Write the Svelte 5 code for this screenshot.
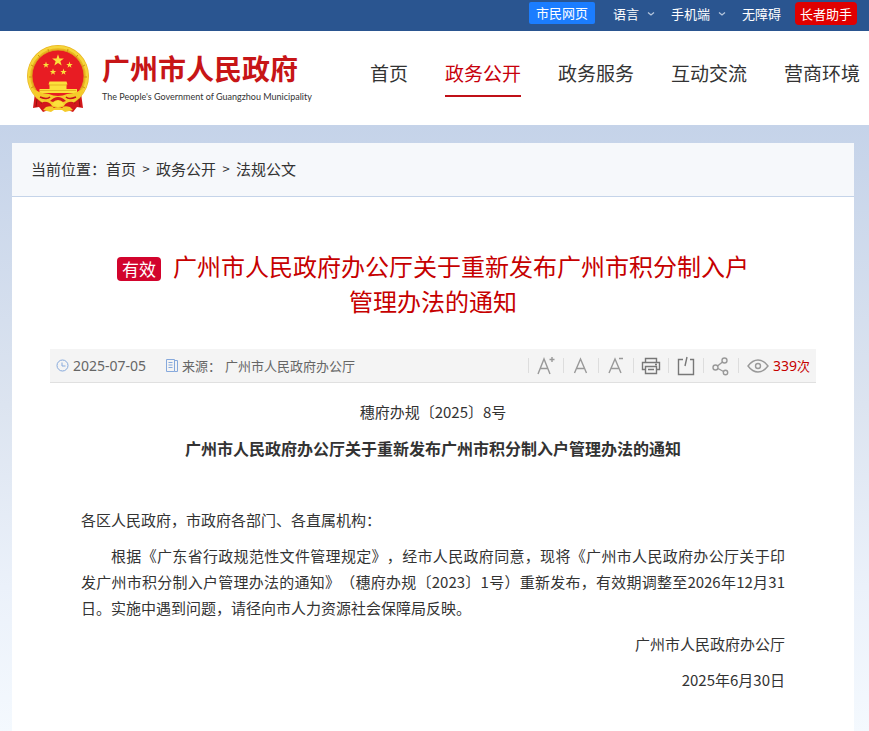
<script>
  const nav = ['首页', '政务公开', '政务服务', '互动交流', '营商环境'];
  const current = '政务公开';
  const crumbs = ['首页', '政务公开', '法规公文'];
  const star = '0,-10 2.4,-3.2 9.5,-3.1 3.8,1.2 5.9,8.1 0,4 -5.9,8.1 -3.8,1.2 -9.5,-3.1 -2.4,-3.2';
  const stars = [
    [31, 15.5, 0.62],
    [19, 20, 0.34],
    [42.5, 20, 0.34],
    [26, 27, 0.34],
    [36.5, 27, 0.34]
  ];
</script>

<div class="page">
  <div class="topbar">
    <a class="citizen" href="#citizen">市民网页</a>
    <button class="drop">语言
      <svg width="8" height="6" viewBox="0 0 8 6"><path d="M1 1.5 4 4l3-2.5" /></svg>
    </button>
    <button class="drop">手机端
      <svg width="8" height="6" viewBox="0 0 8 6"><path d="M1 1.5 4 4l3-2.5" /></svg>
    </button>
    <a class="plain" href="#accessible">无障碍</a>
    <a class="elder" href="#elder">长者助手</a>
  </div>

  <header>
    <a class="logo" href="#home">
      <svg class="emblem" width="64" height="68" viewBox="0 0 64 68" aria-hidden="true">
        <path d="M9 48 7 63l6-1 4 5 8-3h14l8 3 4-5 6 1-2-15z" fill="#d3181b" />
        <path d="M11 54 10 62M15 55l1 9M49 55l-1 9M53 54l1 8" stroke="#96100f" fill="none" />
        <circle cx="32" cy="31" r="31" fill="#e9b51f" />
        <circle cx="32" cy="31" r="29" fill="none" stroke="#f6d53a" stroke-width="2.5" />
        <path d="M5 20l4 2M3 32h4M5 43l4-2M12 10l3 3M22 4l1 4M59 20l-4 2M61 32h-4M59 43l-4-2M52 10l-3 3M42 4l-1 4" stroke="#cf9214" />
        <circle cx="32" cy="31" r="26" fill="#e81c23" stroke="#dca41a" stroke-width=".8" />
        <g fill="#fbe03b" transform="translate(1 0)">
          {#each stars as [x, y, s]}
            <polygon points={star} transform="translate({x} {y}) scale({s})" />
          {/each}
          <path d="M22.5 36.500h17l1 3h-1v4.500h10.500v4H12.500v-4H22.500v-4.500h-1z" />
        </g>
        <path d="M23 40h18M14 45.500h36" stroke="#e2a91c" stroke-width=".8" />
        <path d="M6 43q6 5 17 6 4 2 9 2t9-2q11-1 17-6-1 9-9 12l-8 3q-4 5-9 5t-9-5l-8-3Q7 52 6 43z" fill="#f5cb2a" />
        <path d="M14 52q7 3 10 0M50 52q-7 3-10 0" stroke="#c9131a" stroke-width="1.6" fill="none" />
        <path d="M17 57q6-1 9 4l-8 5-5-5zM47 57q-6-1-9 4l8 5 5-5z" fill="#d3181b" />
        <path d="M24 56q8-8 16 0l-3 1q-5-4-10 0z" fill="#d3181b" />
        <path d="M27 58q5-5 10 0l1 2-6 2-6-2z" fill="#fbe03b" />
        <path d="M20 62q6-2 8 1h8q2-3 8-1l3 3-8 2-3-2h-8l-3 2-8-2z" fill="#f5cb2a" />
      </svg>
      <span class="names">
        <strong>广州市人民政府</strong>
        <small>The People's Government of Guangzhou Municipality</small>
      </span>
    </a>
    <nav>
      {#each nav as item}
        <a href="#nav" class:active={item === current}>{item}</a>
      {/each}
    </nav>
  </header>

  <main>
    <div class="panel">
      <div class="crumbs">
        <span>当前位置：</span>
        {#each crumbs as c, i}
          {#if i}<span class="sep">&gt;</span>{/if}<a href="#crumb">{c}</a>
        {/each}
      </div>

      <article>
        <h1><span class="badge">有效</span>广州市人民政府办公厅关于重新发布广州市积分制入户管理办法的通知</h1>

        <div class="meta">
          <svg class="blue" width="13" height="13" viewBox="0 0 13 13"><circle cx="6.5" cy="6.5" r="5.5" /><path d="M6 3.5V7h3.5" /></svg>
          <time>2025-07-05</time>
          <svg class="blue doc" width="13" height="13" viewBox="0 0 13 13"><path d="M1.5.5h8v12h-8zM9.500 1.500h3v11h-3M3.500 3.500h4M3.500 6h4M3.500 8.500h4" /></svg>
          <span class="label">来源：</span>
          <span>广州市人民政府办公厅</span>
          <div class="tools">
            <button aria-label="放大字体"><svg width="20" height="20" viewBox="0 0 20 20"><path d="M2 18 8 3l6 15M4.5 12.5h7M13.500 3.500h5M16 1v5" /></svg></button>
            <button aria-label="默认字体"><svg width="20" height="20" viewBox="0 0 20 20"><path d="M3.500 17 9.500 3l6 14M6 12.500h7" /></svg></button>
            <button aria-label="缩小字体"><svg width="20" height="20" viewBox="0 0 20 20"><path d="M3 17 9 3l6 14M5.500 12.500h7M13 2.500h4" /></svg></button>
            <button aria-label="打印"><svg class="dark" width="20" height="20" viewBox="0 0 20 20"><path d="M4.500 6V2.500h11V6M4.500 13.500h-3v-7h17v7h-3M4.500 10.500h11v7h-11zM7 13.500h6M14 8.500h2" /></svg></button>
            <button aria-label="导出"><svg class="dark" width="20" height="20" viewBox="0 0 20 20"><path d="M7 3.500H2.500v15h15v-15H14M11 1 9 10" /></svg></button>
            <button aria-label="分享"><svg width="20" height="20" viewBox="0 0 20 20"><circle cx="13.500" cy="4.500" r="2.500" /><circle cx="4.500" cy="11.500" r="2.500" /><circle cx="14.500" cy="16.500" r="2.200" /><path d="M11.500 6 6.500 10M7 12.500l5.500 3" /></svg></button>
            <span class="views">
              <svg width="22" height="16" viewBox="0 0 22 16"><path d="M1 8q4.500-6 10-6t10 6q-4.500 6-10 6T1 8z" /><circle cx="11" cy="8" r="2.500" /></svg>
              <span class="count"><span class="num">339</span>次</span>
            </span>
          </div>
        </div>

        <div class="text">
          <p class="center">穗府办规〔2025〕8号</p>
          <h2>广州市人民政府办公厅关于重新发布广州市积分制入户管理办法的通知</h2>
          <p>&nbsp;</p>
          <p>各区人民政府，市政府各部门、各直属机构：</p>
          <p class="indent">根据《广东省行政规范性文件管理规定》，经市人民政府同意，现将《广州市人民政府办公厅关于印发广州市积分制入户管理办法的通知》（穗府办规〔2023〕1号）重新发布，有效期调整至2026年12月31日。实施中遇到问题，请径向市人力资源社会保障局反映。</p>
          <p class="right">广州市人民政府办公厅</p>
          <p class="right">2025年6月30日</p>
        </div>
      </article>
    </div>
  </main>
</div>

<style>
  :global(body) { margin: 0; }
  .page {
    min-height: 100vh;
    display: flex;
    flex-direction: column;
    font-family: "Noto Sans CJK SC", sans-serif;
    color: #333;
    text-spacing-trim: space-all;
    background: #fff;
  }
  a { color: inherit; text-decoration: none; }
  button { font: inherit; color: inherit; background: none; border: 0; padding: 0; }
  svg { display: block; flex: none; }

  .topbar {
    display: flex;
    justify-content: flex-end;
    align-items: flex-start;
    box-sizing: border-box;
    height: 31px;
    padding: 2px 12px 0 0;
    background: #2a5590;
    color: #fff;
    font-size: 13px;
    line-height: 23px;
    white-space: nowrap;
  }
  .citizen { background: #1b7dff; border-radius: 2px; padding: 0 7px; line-height: 22px; margin-right: 18px; }
  .drop { display: flex; align-items: center; gap: 8px; margin-right: 16px; }
  .drop svg { fill: none; stroke: #b4c5dc; stroke-width: 1.3; }
  .plain { margin-right: 14px; }
  .elder { background: #e00000; border-radius: 4px; padding: 0 5px; }

  header { display: flex; align-items: flex-start; height: 94px; padding-left: 26px; background: #fff; }
  .logo { display: flex; gap: 12px; width: 344px; padding-top: 14px; flex: none; box-sizing: border-box; }
  .names { display: flex; flex-direction: column; padding-top: 4px; white-space: nowrap; }
  .names strong { font-size: 28px; line-height: 38px; font-weight: 700; color: #c71517; }
  .names small { font-family: Lato, sans-serif; font-size: 9px; line-height: 20px; color: #333; }
  nav { display: flex; gap: 37px; padding-top: 20px; white-space: nowrap; }
  nav a { font-size: 19px; line-height: 44px; border-bottom: 2px solid transparent; }
  nav .active { color: #c7000b; border-color: #c01018; }

  main {
    flex: 1;
    display: flex;
    padding: 18px 15px 0 12px;
    background: linear-gradient(#c5d3e9, #dce4f0 46%, #ebf1fa 76%, #f4f9fe);
  }
  .panel { flex: 1; min-width: 0; background: #fff; }
  .crumbs {
    display: flex;
    padding: 0 19px 2px;
    font-size: 15px;
    line-height: 51px;
    background: #f6f8fb;
    border-bottom: 1px solid #c5d4e9;
  }
  .sep { width: 20px; text-align: center; font-size: 13px; }

  article { padding: 51px 38px 30px; }
  h1 {
    max-width: 640px;
    margin: 0 auto 31px;
    text-align: center;
    color: #c60000;
    font-size: 24px;
    line-height: 35px;
    font-weight: 400;
  }
  .badge {
    display: inline-block;
    margin-right: 12px;
    padding: 0 5px;
    border-radius: 4px;
    background: #d2042d;
    color: #fff;
    font-size: 17px;
    line-height: 24px;
  }

  .meta {
    display: flex;
    align-items: center;
    height: 33px;
    padding: 0 6px;
    background: #f4f4f4;
    border-bottom: 1px solid #e0e0e0;
    color: #666;
    font-size: 13px;
    white-space: nowrap;
  }
  .blue { fill: none; stroke: #86a9dc; }
  time { font-family: "Noto Sans", sans-serif; font-size: 14px; margin-left: 4px; }
  .doc { margin: 0 4px 0 19px; }
  .label { margin-right: 4px; }
  .tools { display: flex; align-items: center; margin-left: auto; }
  .tools svg { fill: none; stroke: #999; stroke-width: 1.4; }
  .tools .dark { stroke: #777; }
  .tools button {
    display: flex;
    align-items: center;
    justify-content: center;
    box-sizing: border-box;
    width: 35px;
    height: 15px;
    border-left: 1px solid #ddd;
  }
  .views { display: flex; align-items: center; gap: 4px; padding-left: 8px; height: 15px; border-left: 1px solid #ddd; color: #c60000; }
  .num { font-family: "Noto Sans", sans-serif; font-size: 14px; }

  .text { padding: 16px 31px 0; font-size: 15px; line-height: 26px; }
  p, h2 { margin: 0 0 10px; }
  h2 { font-size: 16px; line-height: 26px; text-align: center; }
  .center { text-align: center; }
  .indent { text-indent: 2em; text-align: justify; }
  .right { text-align: right; }
</style>
